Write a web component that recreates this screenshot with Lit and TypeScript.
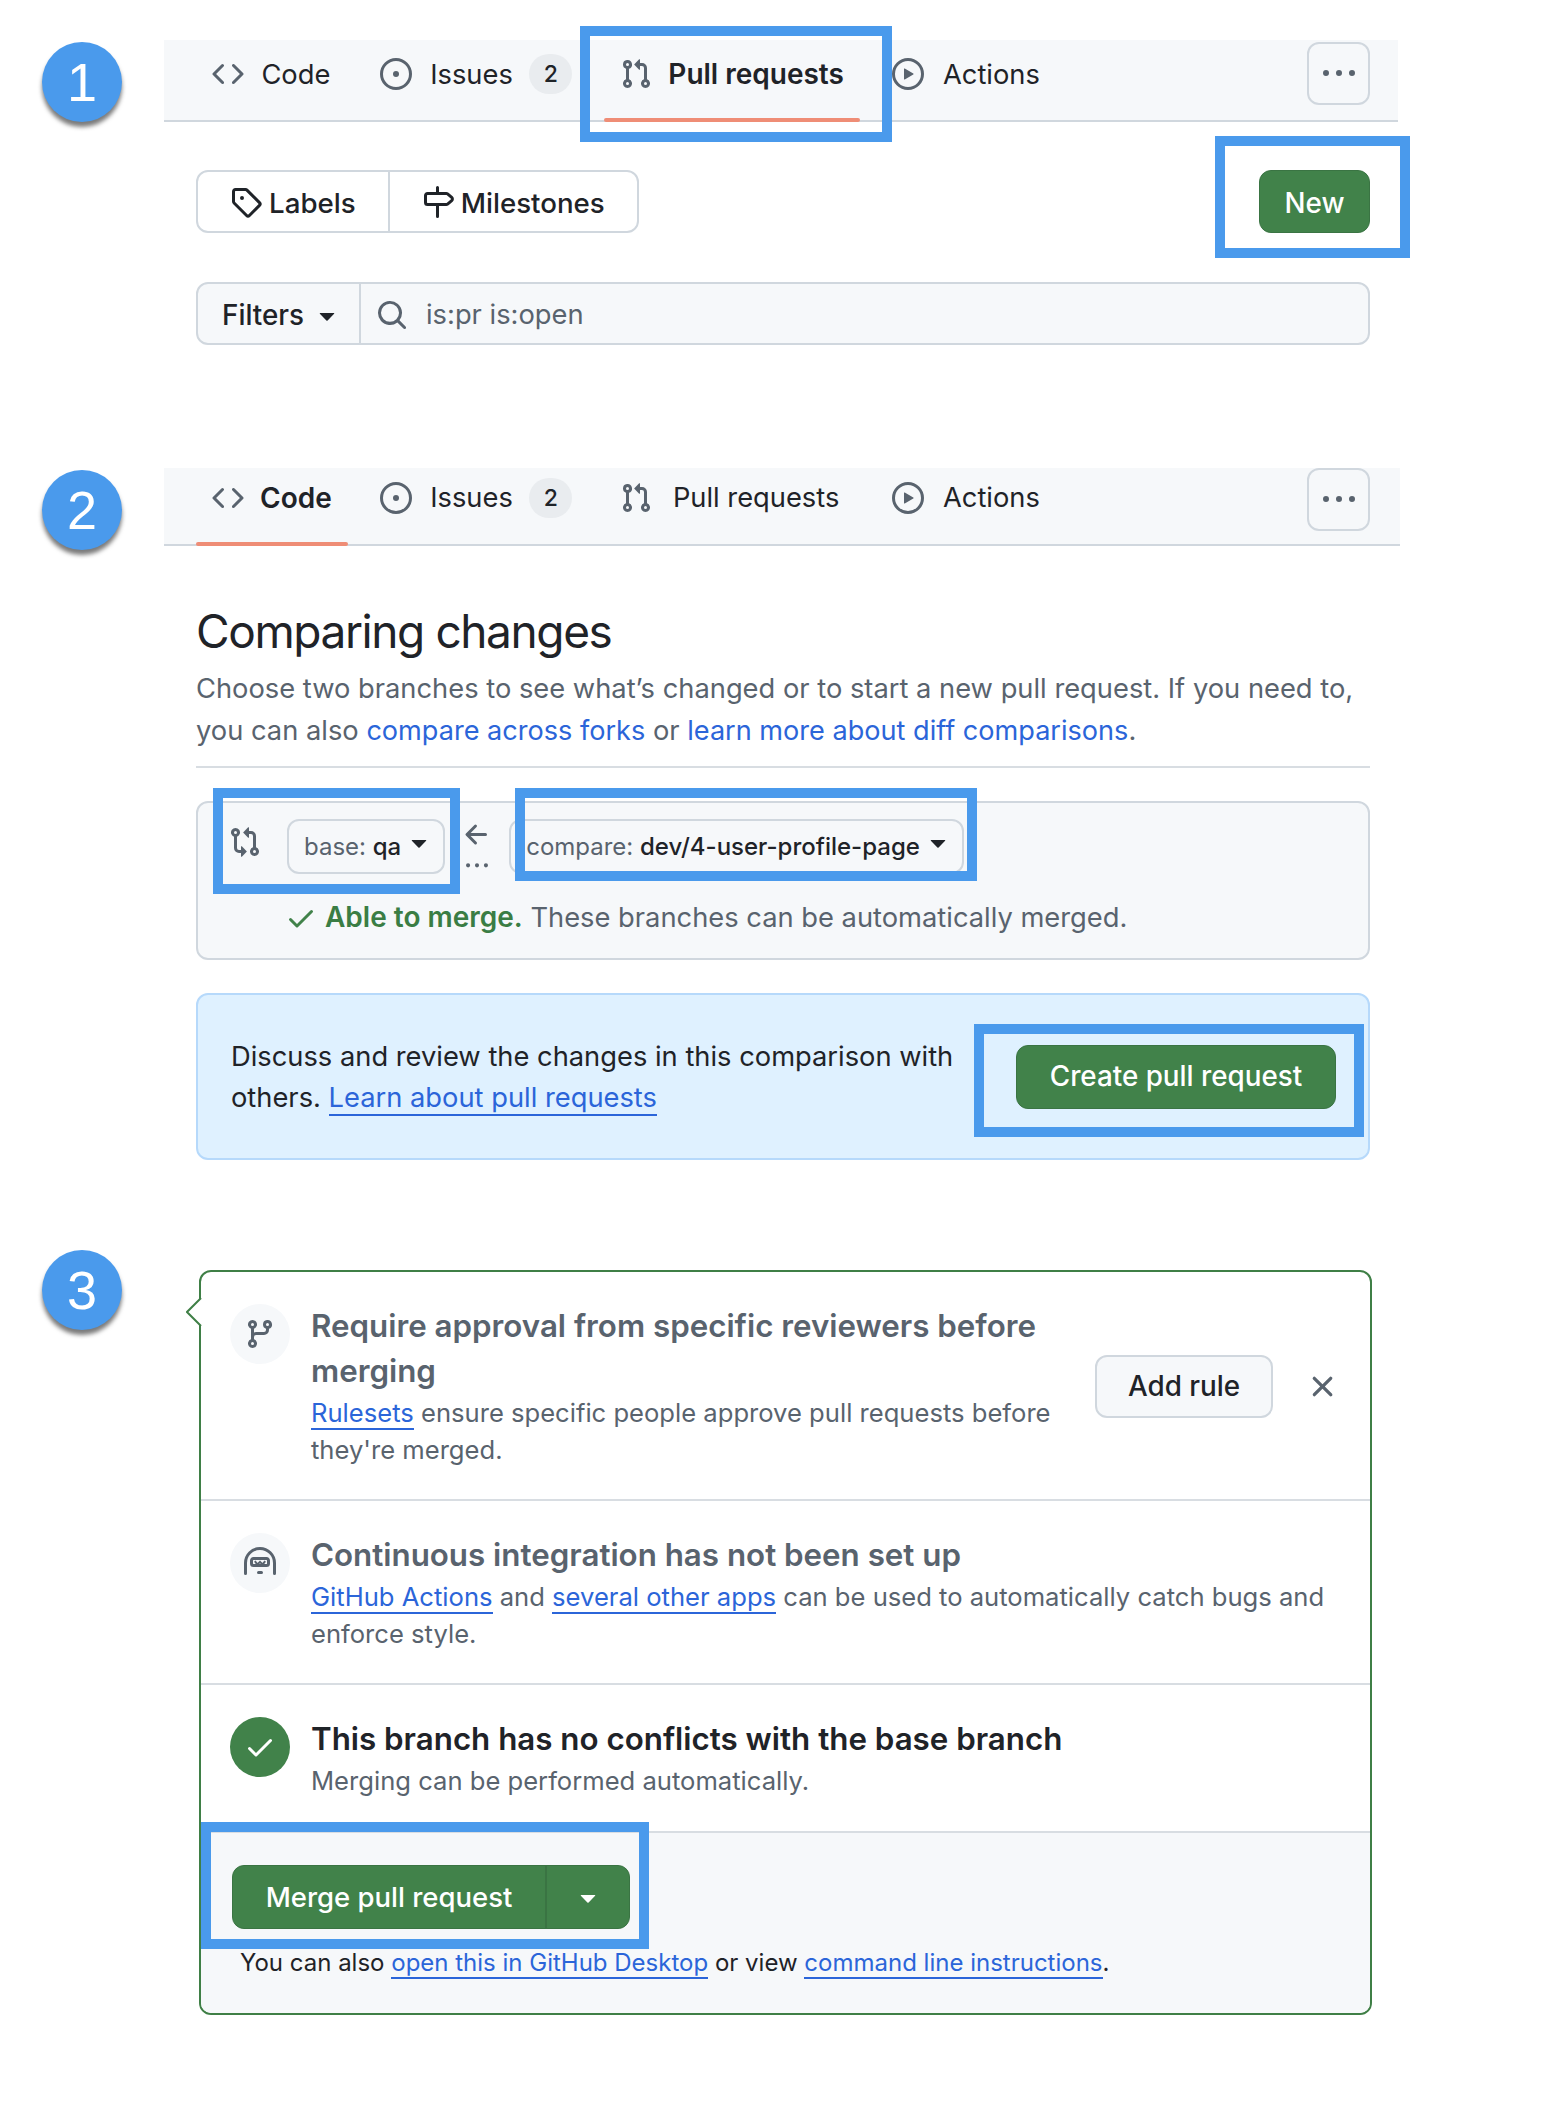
import { LitElement, css, html, svg } from 'lit';
import { customElement } from 'lit/decorators.js';

const paths: Record<string, ReturnType<typeof svg>> = {
  code: svg`<path d="m11.28 3.22 4.25 4.25a.75.75 0 0 1 0 1.06l-4.25 4.25a.749.749 0 0 1-1.275-.326.749.749 0 0 1 .215-.734L13.94 8l-3.72-3.72a.749.749 0 0 1 .326-1.275.749.749 0 0 1 .734.215Zm-6.56 0a.751.751 0 0 1 1.042.018.751.751 0 0 1 .018 1.042L2.06 8l3.72 3.72a.749.749 0 0 1-.326 1.275.749.749 0 0 1-.734-.215L.47 8.53a.75.75 0 0 1 0-1.06Z"/>`,
  issue: svg`<path d="M8 9.5a1.5 1.5 0 1 0 0-3 1.5 1.5 0 0 0 0 3Z"/><path d="M8 0a8 8 0 1 1 0 16A8 8 0 0 1 8 0ZM1.5 8a6.5 6.5 0 1 0 13 0 6.5 6.5 0 0 0-13 0Z"/>`,
  pull: svg`<path d="M1.5 3.25a2.25 2.25 0 1 1 3 2.122v5.256a2.251 2.251 0 1 1-1.5 0V5.372A2.25 2.25 0 0 1 1.5 3.25Zm5.677-.177L9.573.677A.25.25 0 0 1 10 .854V2.5h1A2.5 2.5 0 0 1 13.5 5v5.628a2.251 2.251 0 1 1-1.5 0V5a1 1 0 0 0-1-1h-1v1.646a.25.25 0 0 1-.427.177L7.177 3.427a.25.25 0 0 1 0-.354ZM3.75 2.5a.75.75 0 1 0 0 1.5.75.75 0 0 0 0-1.5Zm0 9.5a.75.75 0 1 0 0 1.5.75.75 0 0 0 0-1.5Zm8.25.75a.75.75 0 1 0 1.5 0 .75.75 0 0 0-1.5 0Z"/>`,
  play: svg`<path d="M8 0a8 8 0 1 1 0 16A8 8 0 0 1 8 0ZM1.5 8a6.5 6.5 0 1 0 13 0 6.5 6.5 0 0 0-13 0Zm4.879-2.773 4.264 2.559a.25.25 0 0 1 0 .428l-4.264 2.559A.25.25 0 0 1 6 10.559V5.442a.25.25 0 0 1 .379-.215Z"/>`,
  kebab: svg`<path d="M8 9a1.5 1.5 0 1 0 0-3 1.5 1.5 0 0 0 0 3ZM1.5 9a1.5 1.5 0 1 0 0-3 1.5 1.5 0 0 0 0 3Zm13 0a1.5 1.5 0 1 0 0-3 1.5 1.5 0 0 0 0 3Z"/>`,
  tag: svg`<path d="M1 7.775V2.75C1 1.784 1.784 1 2.75 1h5.025c.464 0 .91.184 1.238.513l6.25 6.25a1.75 1.75 0 0 1 0 2.474l-5.026 5.026a1.75 1.75 0 0 1-2.474 0l-6.25-6.25A1.752 1.752 0 0 1 1 7.775Zm1.5 0c0 .066.026.13.073.177l6.25 6.25a.25.25 0 0 0 .354 0l5.025-5.025a.25.25 0 0 0 0-.354l-6.25-6.25a.25.25 0 0 0-.177-.073H2.75a.25.25 0 0 0-.25.25ZM6 5a1 1 0 1 1 0 2 1 1 0 0 1 0-2Z"/>`,
  milestone: svg`<path d="M7.75 0a.75.75 0 0 1 .75.75V3h3.634c.414 0 .814.147 1.13.414l2.07 1.75a1.75 1.75 0 0 1 0 2.672l-2.07 1.75a1.75 1.75 0 0 1-1.13.414H8.5v5.25a.75.75 0 0 1-1.5 0V10H2.75A1.75 1.75 0 0 1 1 8.25v-3.5C1 3.784 1.784 3 2.75 3H7V.75A.75.75 0 0 1 7.75 0Zm4.384 8.5a.25.25 0 0 0 .161-.06l2.07-1.75a.248.248 0 0 0 0-.38l-2.07-1.75a.25.25 0 0 0-.161-.06H2.75a.25.25 0 0 0-.25.25v3.5c0 .138.112.25.25.25h9.384Z"/>`,
  search: svg`<path d="M10.68 11.74a6 6 0 0 1-7.922-8.982 6 6 0 0 1 8.982 7.922l3.04 3.04a.749.749 0 0 1-.326 1.275.749.749 0 0 1-.734-.215ZM11.5 7a4.499 4.499 0 1 0-8.997 0A4.499 4.499 0 0 0 11.5 7Z"/>`,
  caret: svg`<path d="m4.427 7.427 3.396 3.396a.25.25 0 0 0 .354 0l3.396-3.396A.25.25 0 0 0 11.396 7H4.604a.25.25 0 0 0-.177.427Z"/>`,
  compare: svg`<path d="M9.573.677A.25.25 0 0 1 10 .854V2.5h1A2.5 2.5 0 0 1 13.5 5v5.628a2.251 2.251 0 1 1-1.5 0V5a1 1 0 0 0-1-1h-1v1.646a.25.25 0 0 1-.427.177L7.177 3.427a.25.25 0 0 1 0-.354ZM6 12v-1.646a.25.25 0 0 1 .427-.177l2.396 2.396a.25.25 0 0 1 0 .354l-2.396 2.396A.25.25 0 0 1 6 15.146V13.5H5A2.5 2.5 0 0 1 2.5 11V5.372a2.25 2.25 0 1 1 1.5 0V11a1 1 0 0 0 1 1ZM4 3.25a.75.75 0 1 0-1.5 0 .75.75 0 0 0 1.5 0ZM12.75 12a.75.75 0 1 0 0 1.5.75.75 0 0 0 0-1.5Z"/>`,
  arrow: svg`<path d="M7.78 12.53a.75.75 0 0 1-1.06 0L2.47 8.28a.75.75 0 0 1 0-1.06l4.25-4.25a.751.751 0 0 1 1.042.018.751.751 0 0 1 .018 1.042L4.81 7h7.44a.75.75 0 0 1 0 1.5H4.81l2.97 2.97a.75.75 0 0 1 0 1.06Z"/>`,
  check: svg`<path d="M13.78 4.22a.75.75 0 0 1 0 1.06l-7.25 7.25a.75.75 0 0 1-1.06 0L2.22 9.28a.751.751 0 0 1 .018-1.042.751.751 0 0 1 1.042-.018L6 10.94l6.72-6.72a.75.75 0 0 1 1.06 0Z"/>`,
  x: svg`<path d="M3.72 3.72a.75.75 0 0 1 1.06 0L8 6.94l3.22-3.22a.749.749 0 0 1 1.275.326.749.749 0 0 1-.215.734L9.06 8l3.22 3.22a.749.749 0 0 1-.326 1.275.749.749 0 0 1-.734-.215L8 9.06l-3.22 3.22a.751.751 0 0 1-1.042-.018.751.751 0 0 1-.018-1.042L6.94 8 3.72 4.78a.75.75 0 0 1 0-1.06Z"/>`,
  branch: svg`<path d="M9.5 3.25a2.25 2.25 0 1 1 3 2.122V6A2.5 2.5 0 0 1 10 8.5H6a1 1 0 0 0-1 1v1.128a2.251 2.251 0 1 1-1.5 0V5.372a2.251 2.251 0 1 1 1.5 0v1.836A2.493 2.493 0 0 1 6 7h4a1 1 0 0 0 1-1v-.628A2.25 2.25 0 0 1 9.5 3.25Zm-6 0a.75.75 0 1 0 1.5 0 .75.75 0 0 0-1.5 0Zm8.25-.75a.75.75 0 1 0 0 1.5.75.75 0 0 0 0-1.5ZM4.25 12a.75.75 0 1 0 0 1.5.75.75 0 0 0 0-1.5Z"/>`,
  hubot: svg`<path d="M0 8a8 8 0 0 1 16 0v5.25a.75.75 0 0 1-1.5 0V8a6.5 6.5 0 1 0-13 0v5.25a.75.75 0 0 1-1.5 0Zm3-1.25C3 5.784 3.784 5 4.75 5h6.5c.966 0 1.75.784 1.75 1.75v1.5A1.75 1.75 0 0 1 11.25 10h-6.5A1.75 1.75 0 0 1 3 8.25Zm1.75-.25a.25.25 0 0 0-.25.25v1.5c0 .138.112.25.25.25h6.5a.25.25 0 0 0 .25-.25v-1.5a.25.25 0 0 0-.25-.25ZM6.5 12.75A.75.75 0 0 1 7.25 12h1.5a.75.75 0 0 1 0 1.5h-1.5a.75.75 0 0 1-.75-.75Z"/><path d="M5.4 7.1 6.7 8.7 8 7.4l1.3 1.3 1.3-1.6" fill="none" stroke="currentColor" stroke-width="1"/>`,
};

const icon = (name: string, size = 32) =>
  html`<svg class="icon" width=${size} height=${size} viewBox="0 0 16 16" fill="currentColor" aria-hidden="true">${paths[name]}</svg>`;

@customElement('app-root')
export class AppRoot extends LitElement {
  static styles = css`
    :host {
      display: block;
      min-height: 2122px;
      background: #fff;
      color: #1f2328;
      font-family: Inter, "Liberation Sans", sans-serif;
      font-size: 27.3px;
    }

    a {
      color: #2b65d9;
      text-decoration: none;
    }

    a.line {
      border-bottom: 2px solid #2b65d9;
    }

    .icon {
      display: block;
      flex: none;
    }

    .page {
      padding: 40px 0 0 42px;
    }

    .step-row {
      display: flex;
      gap: 42px;
    }

    .step-row + .step-row {
      margin-top: 123px;
    }

    .step-row.third {
      margin-top: 90px;
    }

    .step {
      flex: none;
      width: 80px;
      height: 80px;
      margin-top: 2px;
      border-radius: 50%;
      background: #4a9aec;
      box-shadow: 0 5px 4px rgba(35, 35, 35, 0.6);
      color: #fff;
      font: 54px/80px "Liberation Sans", sans-serif;
      text-align: center;
    }

    .third .step {
      margin-top: 0;
    }

    .content {
      width: 1234px;
    }

    .mark {
      position: absolute;
      border: 10px solid #4a9aec;
      pointer-events: none;
    }

    /* tab bar */
    .nav {
      box-sizing: border-box;
      display: flex;
      gap: 16px;
      height: 82px;
      padding: 0 28px 0 32px;
      background: #f6f8fa;
      border-bottom: 2px solid #d0d7de;
    }

    .nav.second {
      width: 1236px;
      height: 78px;
      padding-right: 30px;
    }

    .tab {
      position: relative;
      box-sizing: border-box;
      display: flex;
      align-items: center;
      gap: 16px;
      padding: 0 16px 12px;
    }

    .tab .mark {
      inset: -14px -32px -22px -24px;
    }

    .second .tab {
      padding-bottom: 17px;
    }

    .tab .icon {
      color: #59636e;
    }

    .tab.current {
      font-size: 28px;
      font-weight: 600;
    }

    .tab.current::after {
      content: '';
      position: absolute;
      left: 0;
      right: 0;
      bottom: -2px;
      height: 4px;
      border-radius: 2px;
      background: #ef8d76;
    }

    /* bold width is reserved so tabs keep their place */
    .label {
      display: inline-block;
      text-align: center;
    }

    .label::before {
      content: attr(data-text);
      display: block;
      height: 0;
      overflow: hidden;
      visibility: hidden;
      font-size: 28px;
      font-weight: 600;
    }

    .counter {
      min-width: 43px;
      height: 40px;
      border-radius: 20px;
      margin-left: -2px;
      background: #e9ecef;
      font-size: 23px;
      font-weight: 500;
      line-height: 40px;
      text-align: center;
    }

    .more {
      box-sizing: border-box;
      display: grid;
      place-items: center;
      width: 63px;
      height: 63px;
      margin: 2px 0 0 auto;
      border: 2px solid #d0d7de;
      border-radius: 12px;
      color: #59636e;
    }

    .second .more {
      margin-top: 0;
    }

    /* step one */
    .toolbar {
      display: flex;
      justify-content: space-between;
      margin: 48px 28px 0 32px;
    }

    .group {
      box-sizing: border-box;
      display: flex;
      height: 63px;
      border: 2px solid #d0d7de;
      border-radius: 12px;
      font-size: 27.7px;
      font-weight: 500;
    }

    .group span {
      display: flex;
      align-items: center;
      gap: 7px;
      padding: 2px 32px 0 32px;
    }

    .group span + span {
      border-left: 2px solid #d0d7de;
    }

    .group .icon {
      margin-top: -2px;
    }

    .btn-green {
      position: relative;
      box-sizing: border-box;
      display: flex;
      align-items: center;
      justify-content: center;
      border: 1px solid #3a7443;
      border-radius: 12px;
      background: #41824a;
      color: #fff;
      font-size: 27.8px;
      font-weight: 500;
    }

    .new {
      width: 111px;
      height: 63px;
      padding-top: 2px;
    }

    .new .mark {
      inset: -35px -41px -26px -45px;
    }

    .filter {
      box-sizing: border-box;
      display: flex;
      height: 63px;
      margin: 49px 28px 0 32px;
      border: 2px solid #d0d7de;
      border-radius: 12px;
      background: #f6f8fa;
    }

    .filter-menu {
      display: flex;
      align-items: center;
      gap: 7px;
      width: 163px;
      box-sizing: border-box;
      padding: 2px 0 0 24px;
      border-right: 2px solid #d0d7de;
      font-size: 27.8px;
      font-weight: 500;
    }

    .filter-query {
      display: flex;
      align-items: center;
      gap: 18px;
      padding: 2px 0 0 15px;
      color: #59636e;
    }

    /* step two */
    .compare-body {
      margin: 0 28px 0 32px;
    }

    h1 {
      margin: 57px 0 0;
      font-size: 46px;
      font-weight: 400;
      line-height: 56px;
      letter-spacing: -1.4px;
    }

    .lead {
      margin: 9px 0 0;
      padding-bottom: 14px;
      border-bottom: 2px solid #d8dde2;
      color: #59636e;
      line-height: 42px;
    }

    .lead a {
      font-size: 27.1px;
    }

    .branches {
      box-sizing: border-box;
      height: 159px;
      margin-top: 33px;
      padding: 16px 0 0 31px;
      border: 2px solid #d0d7de;
      border-radius: 12px;
      background: #f6f8fa;
    }

    .branch-row {
      display: flex;
    }

    .base-wrap {
      position: relative;
      display: flex;
      gap: 26px;
      color: #59636e;
    }

    .base-wrap > .icon {
      margin-top: 7px;
    }

    .base-wrap .mark {
      inset: -31px -15px -17px -16px;
    }

    .select {
      position: relative;
      box-sizing: border-box;
      display: flex;
      align-items: center;
      height: 55px;
      padding: 0 15px;
      border: 2px solid #d0d7de;
      border-radius: 12px;
      color: #59636e;
      font-size: 24px;
      white-space: nowrap;
    }

    .select b {
      color: #1f2328;
      font-weight: 500;
    }

    .select .icon {
      margin: -10px -7px 0 2px;
      color: #1f2328;
    }

    .select.head .mark {
      inset: -33px -15px -9px 4px;
    }

    .swap {
      display: flex;
      flex-direction: column;
      align-items: center;
      width: 64px;
      color: #59636e;
    }

    .swap .icon:last-child {
      margin-top: 4px;
    }

    .merge-note {
      display: flex;
      align-items: center;
      gap: 8px;
      margin: 22px 0 0 56px;
      color: #59636e;
      line-height: 36px;
    }

    .merge-note .icon {
      color: #41824a;
    }

    .merge-note strong {
      color: #3a7d44;
      font-size: 28px;
      font-weight: 600;
    }

    .discuss {
      box-sizing: border-box;
      display: flex;
      align-items: center;
      justify-content: space-between;
      height: 167px;
      margin-top: 33px;
      padding: 0 32px 0 33px;
      border: 2px solid #b6d9fb;
      border-radius: 12px;
      background: #dff1ff;
      line-height: 41px;
    }

    .discuss p {
      width: 750px;
      margin: 0;
    }

    .create {
      width: 320px;
      height: 64px;
    }

    .create .mark {
      inset: -22px -29px -29px -43px;
    }

    /* step three */
    .pointer {
      position: absolute;
      left: -15px;
      top: 26px;
    }

    .card {
      position: relative;
      margin: 20px 26px 0 35px;
      border: 2px solid #3f7f46;
      border-radius: 12px;
    }

    .entry {
      display: flex;
      gap: 21px;
      padding: 32px 30px 31px 29px;
      border-bottom: 2px solid #d8dde2;
    }

    .badge {
      flex: none;
      display: grid;
      place-items: center;
      width: 60px;
      height: 60px;
      border-radius: 50%;
      background: #f6f8fa;
      color: #59636e;
    }

    .badge.ok {
      background: #41824a;
      color: #fff;
    }

    .entry-text {
      flex: 1;
      min-width: 0;
    }

    .entry-text h3 {
      margin: 0 0 1px;
      color: #59636e;
      font-size: 31.3px;
      font-weight: 600;
      line-height: 45px;
    }

    .entry-text h3.on {
      color: #1f2328;
    }

    .entry-text p {
      margin: 0;
      color: #59636e;
      font-size: 25.6px;
      line-height: 36.5px;
    }

    .entry-actions {
      flex: none;
      display: flex;
      align-items: center;
      gap: 32px;
      margin-left: 14px;
      color: #59636e;
    }

    .plain {
      box-sizing: border-box;
      display: flex;
      align-items: center;
      justify-content: center;
      width: 178px;
      height: 63px;
      border: 2px solid #d0d7de;
      border-radius: 12px;
      background: #f6f8fa;
      color: #1f2328;
      font-size: 27.8px;
      font-weight: 500;
    }

    .footer {
      padding: 32px 0 32px 31px;
      border-radius: 0 0 10px 10px;
      background: #f6f8fa;
    }

    .split {
      display: flex;
      width: 398px;
      height: 64px;
      padding: 0;
      align-items: stretch;
      font-size: 27.5px;
    }

    .split .mark {
      inset: -44px -20px -21px -32px;
    }

    .split-main {
      display: flex;
      align-items: center;
      justify-content: center;
      flex: 1;
      border-right: 2px solid #3a7443;
    }

    .split-menu {
      display: grid;
      place-items: center;
      width: 82px;
    }

    .footer p {
      margin: 16px 0 0 8px;
      font-size: 24px;
      line-height: 36px;
    }
  `;

  private nav(active: string, second = false) {
    const tabs = [
      { id: 'code', text: 'Code', glyph: 'code' },
      { id: 'issues', text: 'Issues', glyph: 'issue', count: 2 },
      { id: 'pull', text: 'Pull requests', glyph: 'pull' },
      { id: 'actions', text: 'Actions', glyph: 'play' },
    ];
    return html`
      <nav class="nav ${second ? 'second' : ''}">
        ${tabs.map(
          (t) => html`
            <div class="tab ${t.id === active ? 'current' : ''}">
              ${icon(t.glyph)}
              <span class="label" data-text=${t.text}>${t.text}</span>
              ${t.count ? html`<span class="counter">${t.count}</span>` : ''}
              ${t.id === active && !second ? html`<div class="mark"></div>` : ''}
            </div>
          `,
        )}
        <div class="more">${icon('kebab')}</div>
      </nav>
    `;
  }

  render() {
    return html`
      <div class="page">
        <section class="step-row">
          <div class="step">1</div>
          <div class="content">
            ${this.nav('pull')}
            <div class="toolbar">
              <div class="group">
                <span>${icon('tag')}Labels</span>
                <span>${icon('milestone')}Milestones</span>
              </div>
              <div class="btn-green new">New<div class="mark"></div></div>
            </div>
            <div class="filter">
              <div class="filter-menu">Filters ${icon('caret')}</div>
              <div class="filter-query">${icon('search')}is:pr is:open</div>
            </div>
          </div>
        </section>

        <section class="step-row">
          <div class="step">2</div>
          <div class="content">
            ${this.nav('code', true)}
            <div class="compare-body">
              <h1>Comparing changes</h1>
              <p class="lead">
                Choose two branches to see what’s changed or to start a new pull request. If you need to, you can also
                <a href="#">compare across forks</a> or <a href="#">learn more about diff comparisons</a>.
              </p>
              <div class="branches">
                <div class="branch-row">
                  <div class="base-wrap">
                    ${icon('compare')}
                    <div class="select">base:&nbsp;<b>qa</b>${icon('caret')}</div>
                    <div class="mark"></div>
                  </div>
                  <div class="swap">${icon('arrow')}${icon('kebab', 22)}</div>
                  <div class="select head">compare:&nbsp;<b>dev/4-user-profile-page</b>${icon('caret')}<div class="mark"></div></div>
                </div>
                <div class="merge-note">
                  ${icon('check')}
                  <span><strong>Able to merge.</strong> These branches can be automatically merged.</span>
                </div>
              </div>
              <div class="discuss">
                <p>Discuss and review the changes in this comparison with others. <a class="line" href="#">Learn about pull requests</a></p>
                <div class="btn-green create">Create pull request<div class="mark"></div></div>
              </div>
            </div>
          </div>
        </section>

        <section class="step-row third">
          <div class="step">3</div>
          <div class="content">
            <div class="card">
              <svg class="pointer" width="16" height="28" viewBox="0 0 16 28" aria-hidden="true">
                <path d="M15 0 1 14l14 14" fill="#fff" stroke="#3f7f46" stroke-width="2" />
              </svg>
              <div class="entry">
                <div class="badge">${icon('branch')}</div>
                <div class="entry-text">
                  <h3>Require approval from specific reviewers before merging</h3>
                  <p><a class="line" href="#">Rulesets</a> ensure specific people approve pull requests before they're merged.</p>
                </div>
                <div class="entry-actions">
                  <div class="plain">Add rule</div>
                  ${icon('x', 35)}
                </div>
              </div>
              <div class="entry">
                <div class="badge">${icon('hubot')}</div>
                <div class="entry-text">
                  <h3>Continuous integration has not been set up</h3>
                  <p>
                    <a class="line" href="#">GitHub Actions</a> and <a class="line" href="#">several other apps</a> can be used to automatically catch bugs and enforce style.
                  </p>
                </div>
              </div>
              <div class="entry">
                <div class="badge ok">${icon('check')}</div>
                <div class="entry-text">
                  <h3 class="on">This branch has no conflicts with the base branch</h3>
                  <p>Merging can be performed automatically.</p>
                </div>
              </div>
              <div class="footer">
                <div class="btn-green split">
                  <div class="split-main">Merge pull request</div>
                  <div class="split-menu">${icon('caret')}</div>
                  <div class="mark"></div>
                </div>
                <p>You can also <a class="line" href="#">open this in GitHub Desktop</a> or view <a class="line" href="#">command line instructions</a>.</p>
              </div>
            </div>
          </div>
        </section>
      </div>
    `;
  }
}
